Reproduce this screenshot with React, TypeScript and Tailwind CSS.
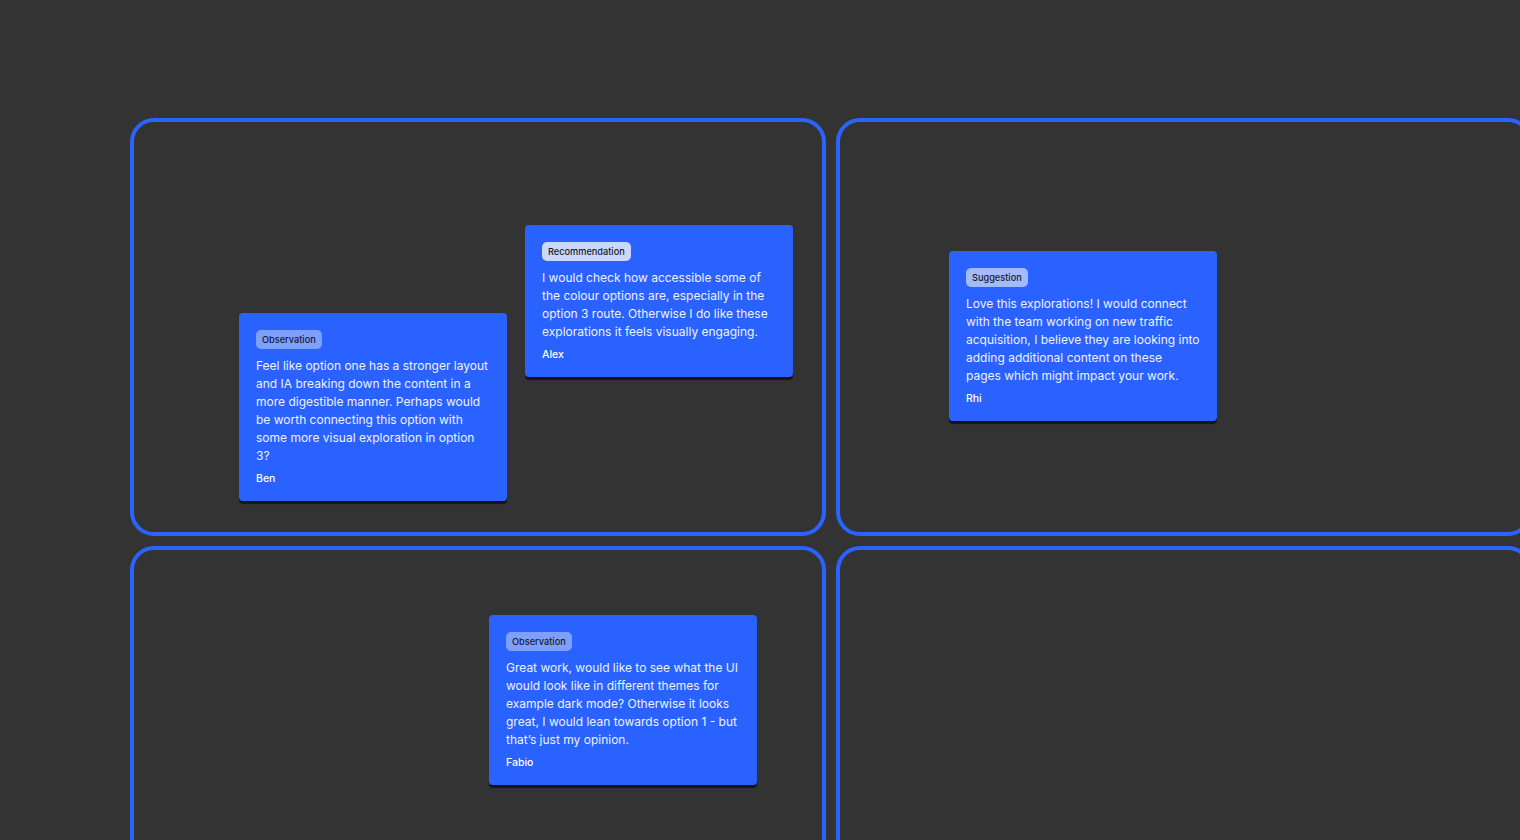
import React from 'react'

type Note = {
  id: string
  tag: 'Observation' | 'Recommendation' | 'Suggestion'
  body: string
  author: string
  x: number
  y: number
}

type Frame = {
  id: string
  notes: Note[]
}

const tagStyles: Record<Note['tag'], string> = {
  Observation: 'bg-[#7f9fff]',
  Recommendation: 'bg-[#cbd8fb]',
  Suggestion: 'bg-[#a3baff]'
}

// note positions are relative to the frame's inner (padding) box
const frames: Frame[] = [
  {
    id: 'f1',
    notes: [
      {
        id: 'ben',
        tag: 'Observation',
        body: 'Feel like option one has a stronger layout and IA breaking down the content in a more digestible manner. Perhaps would be worth connecting this option with some more visual exploration in option 3?',
        author: 'Ben',
        x: 105,
        y: 191
      },
      {
        id: 'alex',
        tag: 'Recommendation',
        body: 'I would check how accessible some of the colour options are, especially in the option 3 route. Otherwise I do like these explorations it feels visually engaging.',
        author: 'Alex',
        x: 391,
        y: 103
      }
    ]
  },
  {
    id: 'f2',
    notes: [
      {
        id: 'rhi',
        tag: 'Suggestion',
        body: 'Love this explorations! I would connect with the team working on new traffic acquisition, I believe they are looking into adding additional content on these pages which might impact your work.',
        author: 'Rhi',
        x: 109,
        y: 129
      }
    ]
  },
  {
    id: 'f3',
    notes: [
      {
        id: 'fabio',
        tag: 'Observation',
        body: 'Great work, would like to see what the UI would look like in different themes for example dark mode? Otherwise it looks great, I would lean towards option 1 - but that\u2019s just my opinion.',
        author: 'Fabio',
        x: 355,
        y: 65
      }
    ]
  },
  { id: 'f4', notes: [] }
]

function StickyNote({ note }: { note: Note }) {
  return (
    <div
      className="absolute w-[268px] rounded-[4px] bg-[#2962ff] px-[17px] pt-[17px] pb-[15px] shadow-[0_3px_1px_rgba(0,0,0,0.6)]"
      style={{ left: note.x, top: note.y }}
    >
      <div className="flex">
        <span
          className={`rounded-[5px] px-[6px] text-[9.2px] leading-[19px] font-medium text-[#161a2b] ${tagStyles[note.tag]}`}
        >
          {note.tag}
        </span>
      </div>
      <p className="mt-[8px] text-[12px] leading-[18px] text-[#eef2ff]">{note.body}</p>
      <div className="mt-[7px] text-[10.5px] leading-[14px] font-medium text-white">{note.author}</div>
    </div>
  )
}

export default function App() {
  return (
    <div
      className="h-[840px] w-[1520px] overflow-hidden bg-[#333333] pt-[118px] pl-[130px]"
      style={{ fontFamily: 'Inter, "Noto Sans", sans-serif' }}
    >
      <div className="grid w-[1402px] grid-cols-[696px_696px] grid-rows-[418px_418px] gap-[10px]">
        {frames.map((frame) => (
          <div
            key={frame.id}
            className="relative rounded-[24px] border-4 border-[#2b63ff]"
          >
            {frame.notes.map((note) => (
              <StickyNote key={note.id} note={note} />
            ))}
          </div>
        ))}
      </div>
    </div>
  )
}
